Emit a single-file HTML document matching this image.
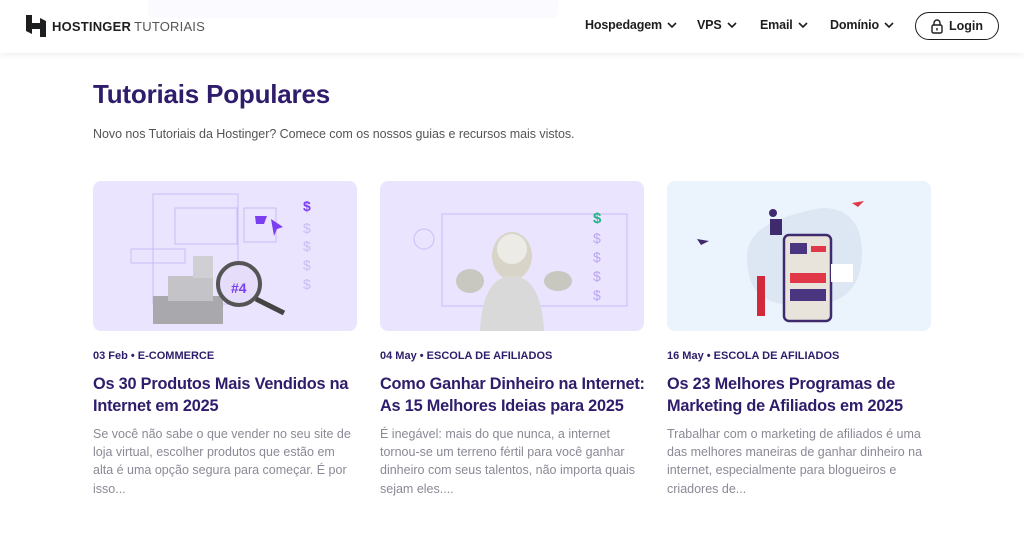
<!DOCTYPE html>
<html><head><meta charset="utf-8"><style>
*{margin:0;padding:0;box-sizing:border-box}
body{width:1024px;height:537px;overflow:hidden;background:#fff;font-family:"Liberation Sans",sans-serif;position:relative}
.hdr{position:absolute;left:0;top:0;width:1024px;height:53px;background:#fff;box-shadow:0 2px 6px rgba(0,0,0,.07);z-index:2}
.ghost{position:absolute;left:148px;top:0;width:410px;height:18px;background:#fafaff;border-radius:0 0 6px 6px;z-index:3}
.logo{position:absolute;left:26px;top:15px;display:flex;align-items:center}
.logo b{font-size:13px;letter-spacing:.2px;color:#1d1e20;margin-left:6px}
.logo span{font-size:13px;color:#555;margin-left:3px;letter-spacing:.2px}
.nav{position:absolute;top:18px;font-size:12.5px;font-weight:bold;color:#1d1e20;letter-spacing:-.15px}
.nav svg{vertical-align:middle;margin-left:5px}
.login{position:absolute;left:915px;top:12px;width:84px;height:28px;border:1.3px solid #1d1e20;border-radius:14px;font-size:12.5px;font-weight:bold;color:#1d1e20;display:flex;align-items:center;justify-content:center;gap:6px}
h1{position:absolute;left:93px;top:79px;font-size:26px;color:#2f1c6a;font-weight:bold;letter-spacing:-.2px}
.sub{position:absolute;left:93px;top:127px;font-size:12.5px;color:#555;letter-spacing:-.05px}
.card{position:absolute;top:181px;width:280px}
.img{height:150px;width:264px;border-radius:8px;background:#ebe4fe;position:relative;overflow:hidden}
.date{margin-top:19px;font-size:11px;font-weight:bold;color:#2f1c6a}
.t{margin-top:11px;font-size:16.3px;line-height:22px;font-weight:bold;color:#2f1c6a;letter-spacing:-.2px;white-space:nowrap}
.d{margin-top:8px;font-size:12.5px;line-height:18.2px;color:#8a8a96;white-space:nowrap}
</style></head><body>
<div class="ghost"></div>
<div class="hdr">
 <div class="logo"><svg width="20" height="22" viewBox="0 0 20 22"><path d="M0 0h6v8h8V3l6 3v16h-6v-8H6v5l-6-3z" fill="#1d1e20"/></svg><b>HOSTINGER</b><span>TUTORIAIS</span></div>
 <div class="nav" style="left:585px">Hospedagem<svg width="10" height="7"><path d="M1 1l4 4 4-4" stroke="#1d1e20" stroke-width="1.6" fill="none"/></svg></div>
 <div class="nav" style="left:697px">VPS<svg width="10" height="7"><path d="M1 1l4 4 4-4" stroke="#1d1e20" stroke-width="1.6" fill="none"/></svg></div>
 <div class="nav" style="left:760px">Email<svg width="10" height="7"><path d="M1 1l4 4 4-4" stroke="#1d1e20" stroke-width="1.6" fill="none"/></svg></div>
 <div class="nav" style="left:830px">Domínio<svg width="10" height="7"><path d="M1 1l4 4 4-4" stroke="#1d1e20" stroke-width="1.6" fill="none"/></svg></div>
 <div class="login"><svg width="12" height="15" viewBox="0 0 12 15"><rect x="1" y="6" width="10" height="8" rx="1.5" stroke="#1d1e20" stroke-width="1.4" fill="none"/><path d="M3 6V4a3 3 0 016 0v2" stroke="#1d1e20" stroke-width="1.4" fill="none"/><rect x="5.3" y="9" width="1.4" height="2.5" fill="#1d1e20"/></svg>Login</div>
</div>
<h1>Tutoriais Populares</h1>
<div class="sub">Novo nos Tutoriais da Hostinger? Comece com os nossos guias e recursos mais vistos.</div>

<div class="card" style="left:93px">
 <div class="img"><svg width="264" height="150">
  <rect x="60" y="13" width="85" height="110" fill="none" stroke="#cbbcf5"/>
  <rect x="82" y="27" width="62" height="36" fill="none" stroke="#cbbcf5"/>
  <rect x="151" y="27" width="32" height="34" fill="none" stroke="#cbbcf5"/>
  <path d="M162 35h12l-3 8h-8z" fill="#7a3ff0"/><path d="M178 38l12 8-6 2-3 7z" fill="#7a3ff0"/>
  <text x="210" y="30" font-size="14" font-weight="bold" fill="#7a3ff0" font-family="Liberation Sans">$</text>
  <text x="210" y="52" font-size="14" fill="#cbbcf5" font-family="Liberation Sans">$</text>
  <text x="210" y="70" font-size="14" fill="#cbbcf5" font-family="Liberation Sans">$</text>
  <text x="210" y="89" font-size="14" fill="#cbbcf5" font-family="Liberation Sans">$</text>
  <text x="210" y="108" font-size="14" fill="#cbbcf5" font-family="Liberation Sans">$</text>
  <rect x="38" y="68" width="54" height="14" fill="none" stroke="#cbbcf5"/>
  <rect x="60" y="115" width="70" height="28" fill="#a8a8ad"/><rect x="75" y="95" width="45" height="25" fill="#c4c4c8"/><rect x="100" y="75" width="20" height="22" fill="#d0d0d4"/>
  <circle cx="146" cy="103" r="21" fill="#e5ddfa" stroke="#555" stroke-width="4"/><path d="M163 118l28 14" stroke="#444" stroke-width="5"/>
  <text x="138" y="112" font-size="14" font-weight="bold" fill="#7a3ff0" font-family="Liberation Sans">#4</text>
 </svg></div>
 <div class="date">03 Feb • E-COMMERCE</div>
 <div class="t">Os 30 Produtos Mais Vendidos na<br>Internet em 2025</div>
 <div class="d">Se você não sabe o que vender no seu site de<br>loja virtual, escolher produtos que estão em<br>alta é uma opção segura para começar. É por<br>isso...</div>
</div>

<div class="card" style="left:380px">
 <div class="img"><svg width="264" height="150">
  <rect x="62" y="33" width="185" height="92" fill="none" stroke="#cbbcf5"/>
  <circle cx="44" cy="58" r="10" fill="none" stroke="#cbbcf5"/>
  <text x="213" y="42" font-size="15" font-weight="bold" fill="#1fb38a" font-family="Liberation Sans">$</text>
  <text x="213" y="62" font-size="14" fill="#b9a4f2" font-family="Liberation Sans">$</text>
  <text x="213" y="81" font-size="14" fill="#b9a4f2" font-family="Liberation Sans">$</text>
  <text x="213" y="100" font-size="14" fill="#b9a4f2" font-family="Liberation Sans">$</text>
  <text x="213" y="119" font-size="14" fill="#b9a4f2" font-family="Liberation Sans">$</text>
  <ellipse cx="132" cy="75" rx="20" ry="24" fill="#d8d4c8"/>
  <path d="M100 150c2-40 15-55 32-55s30 15 32 55z" fill="#d9d9d9"/>
  <circle cx="132" cy="68" r="15" fill="#ecebe6"/>
  <ellipse cx="90" cy="100" rx="14" ry="12" fill="#c8c8c0"/><ellipse cx="178" cy="100" rx="14" ry="10" fill="#c8c8c0"/>
 </svg></div>
 <div class="date">04 May • ESCOLA DE AFILIADOS</div>
 <div class="t">Como Ganhar Dinheiro na Internet:<br>As 15 Melhores Ideias para 2025</div>
 <div class="d">É inegável: mais do que nunca, a internet<br>tornou-se um terreno fértil para você ganhar<br>dinheiro com seus talentos, não importa quais<br>sejam eles....</div>
</div>

<div class="card" style="left:667px">
 <div class="img" style="background:#ebf3fd"><svg width="264" height="150">
  <path d="M80 75c0-30 40-40 60-45 30-10 55 5 55 40s-15 55-60 55-55-20-55-50z" fill="#dde6f3"/>
  <rect x="117" y="54" width="47" height="86" rx="5" fill="#e8e4dc" stroke="#3f2a6e" stroke-width="2.5"/>
  <rect x="123" y="62" width="17" height="11" fill="#4a3580"/><rect x="144" y="65" width="15" height="6" fill="#e03848"/>
  <rect x="123" y="92" width="36" height="10" fill="#e03848"/><rect x="123" y="108" width="36" height="12" fill="#4a3580"/>
  <rect x="164" y="83" width="22" height="18" fill="#fff"/>
  <path d="M90 95h8v40h-8z" fill="#d12a3a"/><circle cx="106" cy="32" r="4" fill="#3f2a6e"/><path d="M103 38h12v16h-12z" fill="#3f2a6e"/>
  <path d="M30 58l12 2-8 4z" fill="#3f2a6e"/><path d="M185 22l12-2-6 6z" fill="#e03848"/>
 </svg></div>
 <div class="date">16 May • ESCOLA DE AFILIADOS</div>
 <div class="t">Os 23 Melhores Programas de<br>Marketing de Afiliados em 2025</div>
 <div class="d">Trabalhar com o marketing de afiliados é uma<br>das melhores maneiras de ganhar dinheiro na<br>internet, especialmente para blogueiros e<br>criadores de...</div>
</div>
</body></html>
